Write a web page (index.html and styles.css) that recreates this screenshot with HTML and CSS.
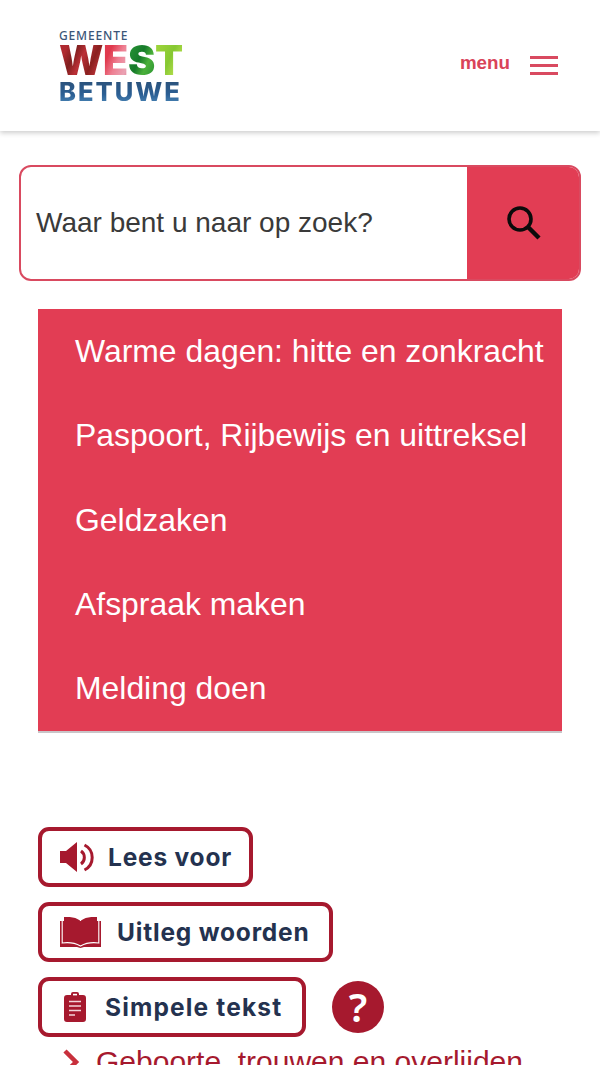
FILE: index.html
```html
<!DOCTYPE html>
<html lang="nl">
<head>
<meta charset="utf-8">
<title>Gemeente West Betuwe</title>
<link rel="stylesheet" href="styles.css">
</head>
<body>
<div class="page">
  <header class="header">
    <a class="logo" href="#">
      <span class="logo-top">GEMEENTE</span>
      <span class="logo-west"><span class="w1">W</span><span class="w2">E</span><span class="w3">S</span><span class="w4">T</span></span>
      <span class="logo-betuwe">BETUWE</span>
    </a>
    <a class="menu" href="#">
      <span class="menu-label">menu</span>
      <span class="burger"><i></i><i></i><i></i></span>
    </a>
  </header>
  <main class="main">
    <form class="search">
      <div class="search-input">Waar bent u naar op zoek?</div>
      <button class="search-btn" type="button" aria-label="Zoeken">
        <svg width="38" height="38" viewBox="0 0 38 38"><circle cx="15" cy="15" r="11" fill="none" stroke="#0b0b0b" stroke-width="3.6"/><path d="M23 23l11 11" stroke="#0b0b0b" stroke-width="4.4" fill="none"/></svg>
      </button>
    </form>
    <nav class="tasks">
      <a href="#">Warme dagen: hitte en zonkracht</a>
      <a href="#">Paspoort, Rijbewijs en uittreksel</a>
      <a href="#">Geldzaken</a>
      <a href="#">Afspraak maken</a>
      <a href="#">Melding doen</a>
    </nav>
    <div class="tools">
      <a class="tool tool-read" href="#">
        <svg width="35" height="31" viewBox="0 0 35 31"><path d="M0 9h6L17 0v30L6 21H0z" fill="#a6192e"/><path d="M21 9a8 8 0 0 1 0 13M24.500 3a14 14 0 0 1 0 25" fill="none" stroke="#a6192e" stroke-width="3"/></svg>
        <span>Lees voor</span>
      </a>
      <a class="tool tool-words" href="#">
        <svg width="41" height="31" viewBox="0 0 41 31"><path d="M0 4h41v26H24l-3.500 1-3.500-1H0z" fill="#a6192e"/><path d="M2.200 4v22c7-1 13 0 18.300 3 5.300-3 11.300-4 18.300-3V4" fill="none" stroke="#fff" stroke-width="1.100"/><path d="M4 0c6-.5 12 .5 16 3.500V27c-4-3-10-4-16-3zM37 0c-6-.5-12 .5-16 3.500V27c4-3 10-4 16-3z" fill="#a6192e"/></svg>
        <span>Uitleg woorden</span>
      </a>
      <div class="tool-row">
        <a class="tool tool-simple" href="#">
          <svg width="22" height="30" viewBox="0 0 22 30"><path d="M3 3h4V2a2 2 0 0 1 2-2h4a2 2 0 0 1 2 2v1h4a3 3 0 0 1 3 3v21a3 3 0 0 1-3 3H3a3 3 0 0 1-3-3V6a3 3 0 0 1 3-3z" fill="#a6192e"/><path d="M5 9.500h12M5 14h12M5 18.500h12M5 23h6" stroke="#f3d5da" stroke-width="1.500"/><rect x="9" y="1.800" width="4" height="1.600" fill="#fff"/></svg>
          <span>Simpele tekst</span>
        </a>
        <a class="help" href="#">?</a>
      </div>
    </div>
    <a class="crumb" href="#">
      <svg width="18" height="28" viewBox="0 0 18 28"><path d="M3 3l11 11L3 25" fill="none" stroke="#c8303c" stroke-width="4.500"/></svg>
      <span>Geboorte, trouwen en overlijden</span>
    </a>
  </main>
</div>
</body>
</html>
```
FILE: styles.css
```css
* { box-sizing: border-box; }
html, body { margin: 0; padding: 0; background: #fff; }
a { text-decoration: none; }
.page { height: 1065px; overflow: hidden; font-family: "Liberation Sans", Arial, sans-serif; }

.header {
  height: 131px;
  display: flex;
  justify-content: space-between;
  padding: 29px 42px 0 59px;
  box-shadow: 0 2px 5px rgba(0, 0, 0, .2);
  position: relative;
}
.logo { display: flex; flex-direction: column; width: 126px; }
.logo-top { font: 500 12px/13px "Noto Sans", sans-serif; letter-spacing: .85px; color: #3b5678; }
.logo-west { font: 900 41px/36px "Inter", sans-serif; letter-spacing: -.3px; white-space: nowrap; }
.w1, .w2, .w3, .w4 { -webkit-background-clip: text; background-clip: text; color: transparent; }
.w1 { background-image: linear-gradient(115deg, #b02a30 0 20%, #7f1e1e 35%, #bb3037 50%, #8a201f 68%, #c2353c 85%); }
.w2 { background-image: linear-gradient(115deg, #e0394d 0 30%, #ee7f92 55%, #eaa3b4 80%, #dc6a84); }
.w3 { background-image: linear-gradient(115deg, #2c9e3a, #167a2a 45%, #4bb03a 65%, #1e8a30); }
.w4 { background-image: linear-gradient(115deg, #a6d83e, #86c832 50%, #b4de4c 75%, #94d038); }
.logo-betuwe {
  font: 800 25.500px/24px "Inter", sans-serif;
  letter-spacing: 2px;
  margin-top: 2px;
  background-image: linear-gradient(180deg, #2b5179, #2b5f94 60%, #4a85b6);
  -webkit-background-clip: text;
  background-clip: text;
  color: transparent;
  width: max-content;
}

.menu { display: flex; align-items: flex-start; gap: 20px; padding-top: 24px; color: #d94359; }
.menu-label { font: 700 18.800px/20px "Liberation Sans", sans-serif; }
.burger { display: flex; flex-direction: column; gap: 4.800px; margin-top: 3px; }
.burger i { display: block; width: 28px; height: 3.300px; background: #d94a60; }

.main { padding: 34px 19px 0; }
.search {
  height: 116px;
  display: flex;
  border: 2px solid #d94a60;
  border-radius: 12px;
  overflow: hidden;
}
.search-input {
  flex: 1;
  display: flex;
  align-items: center;
  padding: 0 0 0 15px;
  font-size: 28px;
  color: #3a3a3a;
}
.search-btn {
  width: 112px;
  margin: 0;
  padding: 0 0 0 2px;
  border: 0;
  background: #e23d54;
  display: flex;
  align-items: center;
  justify-content: center;
}

.tasks {
  margin: 28px 19px 0;
  height: 424px;
  background: #e23d54;
  border-bottom: 2px solid #c9c5c8;
  display: flex;
  flex-direction: column;
}
.tasks a {
  height: 84.500px;
  padding-left: 37px;
  display: flex;
  align-items: center;
  color: #fff;
  font-size: 31.900px;
  white-space: nowrap;
}

.tools { margin: 94px 19px 0; display: flex; flex-direction: column; align-items: flex-start; gap: 15px; }
.tool {
  height: 60px;
  display: inline-flex;
  align-items: center;
  border: 4px solid #a6192e;
  border-radius: 11px;
  background: #fff;
  color: #24324f;
  font: 700 24.500px/1 "Inter", sans-serif;
  letter-spacing: .8px;
  white-space: nowrap;
}
.tool-read { width: 215px; padding-left: 18px; gap: 13px; }
.tool-words { width: 295px; padding-left: 18px; gap: 16px; }
.tool-simple { width: 268px; padding-left: 22px; gap: 19px; letter-spacing: 1.150px; }
.tool-row { display: flex; align-items: center; gap: 26px; }
.help {
  width: 52px;
  height: 52px;
  border-radius: 50%;
  background: #a6192e;
  color: #fff;
  font: 600 40px/51px "Noto Sans", sans-serif;
  text-align: center;
}

.crumb {
  display: flex;
  align-items: center;
  gap: 16px;
  margin: 8px 0 0 43px;
  color: #a6192e;
  font-size: 30px;
  white-space: nowrap;
}
```
